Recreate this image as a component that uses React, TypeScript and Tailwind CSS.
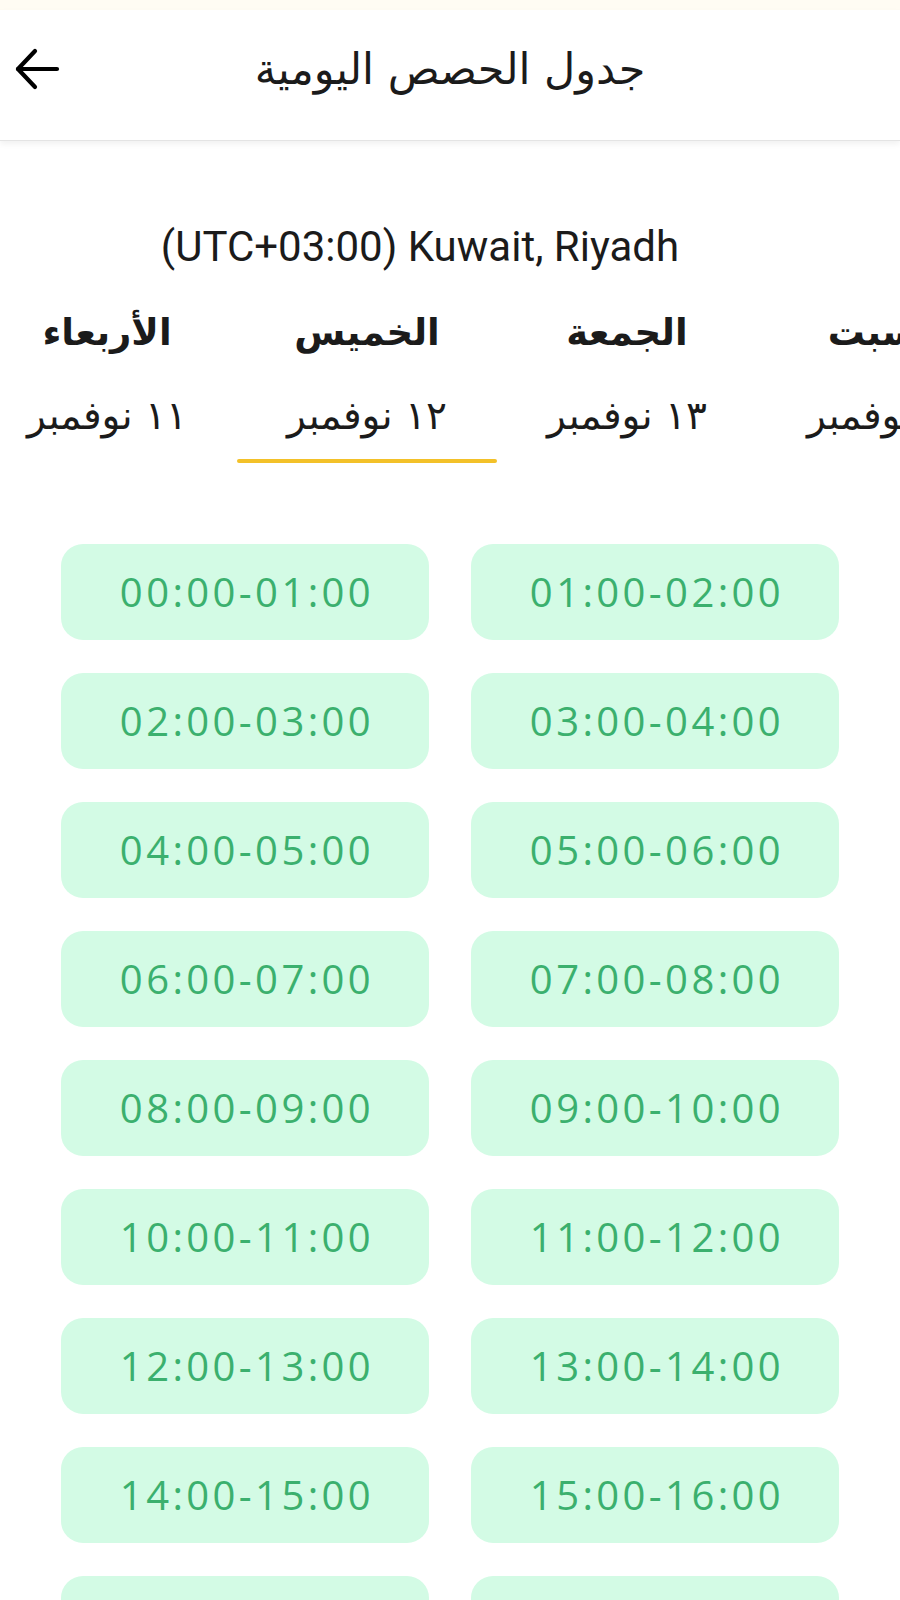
const days = [
  { name: 'السبت', date: '١٤ نوفمبر' },
  { name: 'الجمعة', date: '١٣ نوفمبر' },
  { name: 'الخميس', date: '١٢ نوفمبر', active: true },
  { name: 'الأربعاء', date: '١١ نوفمبر' },
];

const pad = (n: number) => String(n).padStart(2, '0');

const slots = Array.from({ length: 18 }, (_, i) => `${pad(i)}:00-${pad(i + 1)}:00`);

function BackArrow() {
  return (
    <svg width="46" height="42" viewBox="0 0 46 42" fill="none" stroke="currentColor" strokeWidth="4.2" strokeLinecap="round" strokeLinejoin="round">
      <path d="M4 21H43" />
      <path d="M21 3L4 21L21 39" />
    </svg>
  );
}

export default function App() {
  return (
    <div className="min-h-[1600px] bg-white font-['DejaVu_Sans',sans-serif] text-[#1b1b1b]">
      <div className="h-[10px] bg-[#fffcf3]" />

      <header className="relative z-10 grid h-[131px] grid-cols-[90px_1fr_90px] items-center border-b border-[#e4e4e4] bg-white pb-[12px] shadow-[0_3px_6px_rgba(0,0,0,0.06)]">
        <button className="flex items-center pl-[14px] text-black">
          <BackArrow />
        </button>
        <h1 dir="rtl" className="text-center text-[43px] font-normal leading-none">
          جدول الحصص اليومية
        </h1>
        <div />
      </header>

      <div className="mt-[80px] flex h-[50px] items-center justify-center pr-[60px] font-['Roboto',sans-serif] text-[42px] text-[#1b1b1b]">
        (UTC+03:00) Kuwait, Riyadh
      </div>

      <div className="overflow-hidden">
        <div dir="rtl" className="-mr-[117px] flex pt-[37px]">
          {days.map((day) => (
            <div key={day.name} className="flex w-[260px] shrink-0 flex-col items-center">
              <div className="flex h-[50px] items-center text-[37px] font-bold">{day.name}</div>
              <div className="mt-[33px] flex h-[50px] items-center text-[39px]">{day.date}</div>
              <div
                className={`mt-[18px] h-[4px] w-full rounded-full ${day.active ? 'bg-[#f3c129]' : 'bg-transparent'}`}
              />
            </div>
          ))}
        </div>
      </div>

      <div className="mt-[81px] grid grid-cols-2 gap-x-[42px] gap-y-[33px] px-[61px] pb-10">
        {slots.map((slot) => (
          <div
            key={slot}
            className="flex h-[96px] items-center justify-center rounded-[22px] bg-[#d3fbe5] pl-[4px] font-['Open_Sans',sans-serif] text-[40px] tracking-[3.4px] text-[#3bb06e]"
          >
            {slot}
          </div>
        ))}
      </div>
    </div>
  );
}
